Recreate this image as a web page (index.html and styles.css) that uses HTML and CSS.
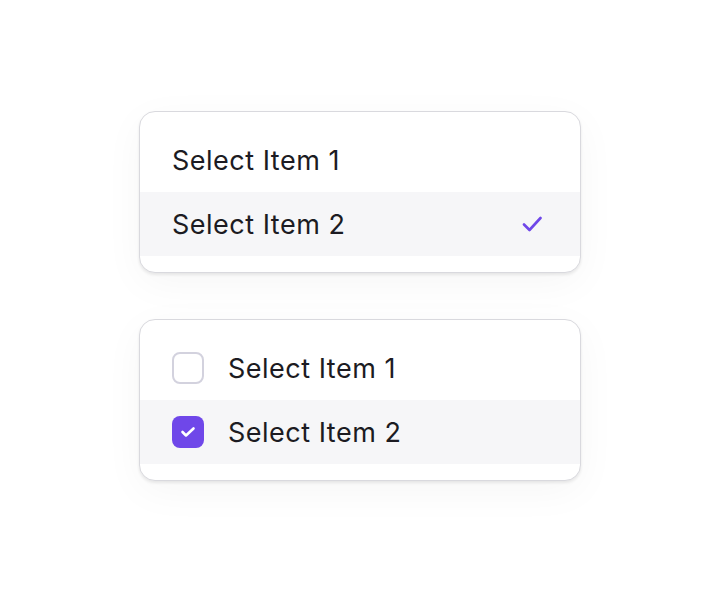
FILE: index.html
```html
<!DOCTYPE html>
<html>
<head>
<meta charset="utf-8">
<link rel="stylesheet" href="styles.css">
</head>
<body>
<main class="stage">
  <div class="card">
    <div class="row">
      <span class="label">Select Item 1</span>
    </div>
    <div class="row active">
      <span class="label">Select Item 2</span>
      <svg class="check" width="20" height="16" viewBox="0 0 20 16"><path d="M2 8.5 L7.5 14 L18.5 2" fill="none" stroke="#6f47e9" stroke-width="2.6" stroke-linecap="round" stroke-linejoin="round"/></svg>
    </div>
  </div>
  <div class="card">
    <div class="row">
      <span class="box"></span>
      <span class="label">Select Item 1</span>
    </div>
    <div class="row active">
      <span class="box on"><svg width="16" height="12" viewBox="0 0 16 12"><path d="M2.5 6 L6 9.5 L13.5 2.5" fill="none" stroke="#fff" stroke-width="2.6" stroke-linecap="round" stroke-linejoin="round"/></svg></span>
      <span class="label">Select Item 2</span>
    </div>
  </div>
</main>
</body>
</html>
```
FILE: styles.css
```css
html, body {
  margin: 0;
  padding: 0;
  background: #ffffff;
}
.stage {
  width: 720px;
  height: 592px;
  display: flex;
  flex-direction: column;
  align-items: center;
  justify-content: center;
  gap: 46px;
  font-family: Inter, "Noto Sans", sans-serif;
}
.card {
  width: 442px;
  box-sizing: border-box;
  border: 1px solid #d9d9de;
  border-radius: 16px;
  background: #fff;
  padding: 16px 0;
  box-shadow: 0 2px 3px rgba(0,0,0,0.08), 0 10px 40px rgba(0,0,0,0.04);
}
.row {
  height: 64px;
  display: flex;
  align-items: center;
  padding: 0 32px;
  gap: 24px;
}
.row.active {
  background: #f6f6f8;
}
.label {
  flex: 1;
  font-size: 27px;
  color: #1c1b22;
  letter-spacing: 0.5px;
}
.check {
  margin-right: 6px;
}
.box {
  width: 32px;
  height: 32px;
  box-sizing: border-box;
  border: 2.5px solid #d3d2de;
  border-radius: 8px;
  display: flex;
  align-items: center;
  justify-content: center;
}
.box.on {
  border: none;
  background: #6f47e9;
}
```
